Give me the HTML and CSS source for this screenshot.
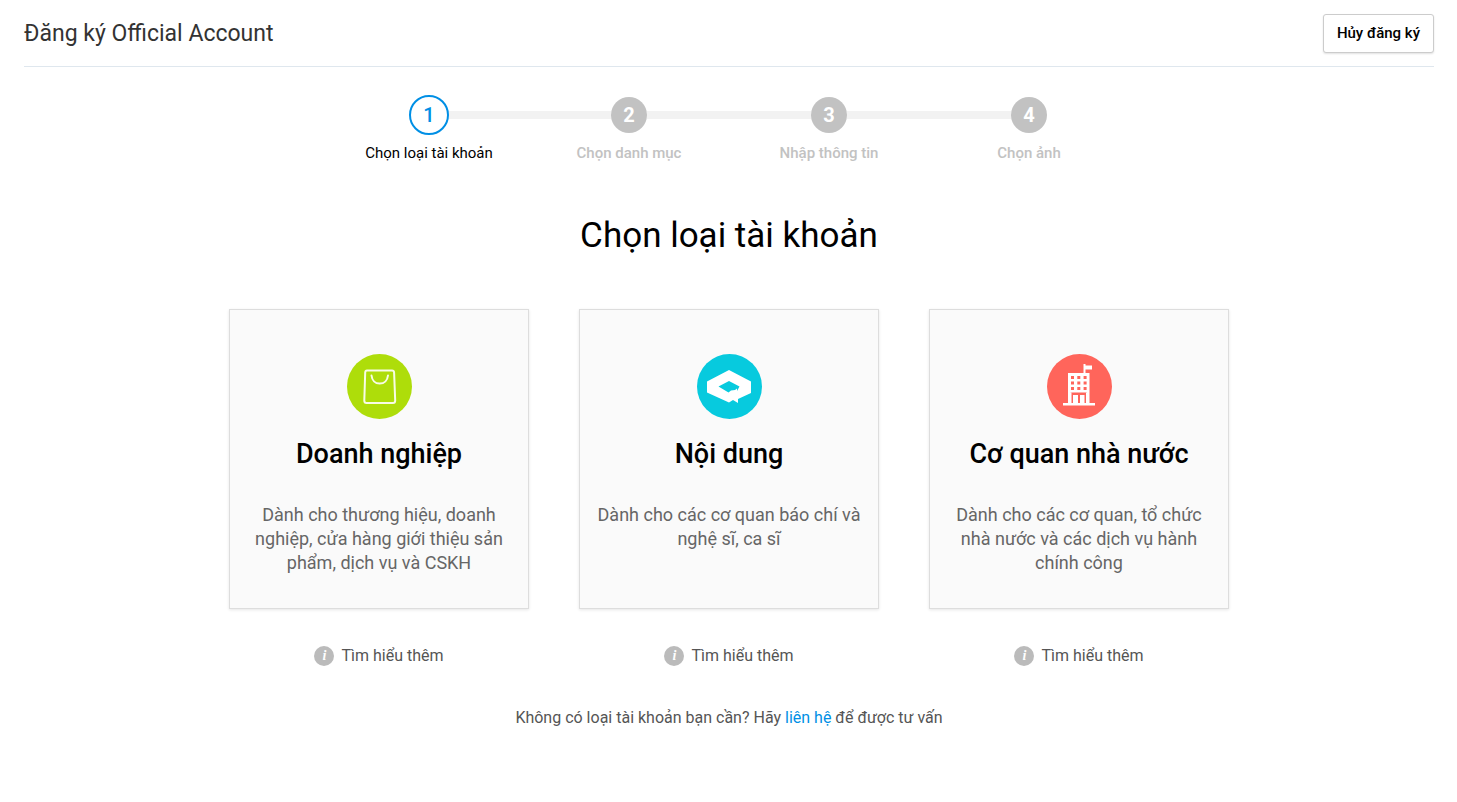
FILE: index.html
```html
<!DOCTYPE html>
<html lang="vi">
<head>
<meta charset="utf-8">
<meta name="viewport" content="width=device-width, initial-scale=1">
<title>Đăng ký Official Account</title>
<link rel="stylesheet" href="styles.css">
</head>
<body>
<header class="header">
  <h1 class="header-title">Đăng ký Official Account</h1>
  <button class="cancel" type="button">Hủy đăng ký</button>
</header>
<main class="main">
  <ol class="steps">
    <li class="step step-active"><span class="step-track"><span class="step-number">1</span></span><span class="step-label">Chọn loại tài khoản</span></li>
    <li class="step"><span class="step-track"><span class="step-number">2</span></span><span class="step-label">Chọn danh mục</span></li>
    <li class="step"><span class="step-track"><span class="step-number">3</span></span><span class="step-label">Nhập thông tin</span></li>
    <li class="step"><span class="step-track"><span class="step-number">4</span></span><span class="step-label">Chọn ảnh</span></li>
  </ol>
  <h2 class="title">Chọn loại tài khoản</h2>
  <div class="types">
    <section class="type">
      <button class="card" type="button">
        <svg class="card-icon" viewBox="0 0 65 65" aria-hidden="true">
          <circle cx="32.500" cy="32.500" r="32.500" fill="#aedd0a"/>
          <g fill="none" stroke="#f8fce6" stroke-width="2" stroke-linecap="round" stroke-linejoin="round">
            <path d="M20 16.500H45Q47 16.500 47.100 18.500L48.200 46.500Q48.200 49 46 49H19.500Q17.300 49 17.300 46.500L18.200 18.500Q18.300 16.500 20 16.500Z"/>
            <path d="M24.500 21.500C25 26 28 29.500 32.700 29.500S40.500 26 41 21.500"/>
          </g>
        </svg>
        <span class="card-name">Doanh nghiệp</span>
        <span class="card-text">Dành cho thương hiệu, doanh nghiệp, cửa hàng giới thiệu sản phẩm, dịch vụ và CSKH</span>
      </button>
      <a class="more" href="#"><span class="info" aria-hidden="true">i</span>Tìm hiểu thêm</a>
    </section>
    <section class="type">
      <button class="card" type="button">
        <svg class="card-icon" viewBox="0 0 65 65" aria-hidden="true">
          <circle cx="32.500" cy="32.500" r="32.500" fill="#07cade"/>
          <path fill="#fff" fill-rule="evenodd" d="M32 16L54 27.500V39L41 45V49L36 46L32 48.500L10 38.500V27.500ZM21.500 32.500L31.500 38.500L34 36.500L38 36L40 34.500V37L42.500 32.500L32 27Z"/>
        </svg>
        <span class="card-name">Nội dung</span>
        <span class="card-text">Dành cho các cơ quan báo chí và nghệ sĩ, ca sĩ</span>
      </button>
      <a class="more" href="#"><span class="info" aria-hidden="true">i</span>Tìm hiểu thêm</a>
    </section>
    <section class="type">
      <button class="card" type="button">
        <svg class="card-icon" viewBox="0 0 65 65" aria-hidden="true">
          <circle cx="32.500" cy="32.500" r="32.500" fill="#ff655b"/>
          <path fill="#fff" d="M36.500 10H38.500V11.500H45V15.500H38.500V19H42.500V49H48V51.500H16V49H21V19H36.500Z"/>
          <path fill="#ff655b" d="M24 22h3v3h-3zM30.300 22h3v3h-3zM36.600 22h3v3h-3zM24 27.500h3v3h-3zM30.300 27.500h3v3h-3zM36.600 27.500h3v3h-3zM24 33h3v3h-3zM30.300 33h3v3h-3zM36.600 33h3v3h-3zM23.500 38.500h16.500V49h-2.500v-8H33v8h-2v-8h-5v8h-2.500z"/>
          <path fill="#fff" d="M23 38.500h1.500V49H23zM39 38.500h1.500V49H39z"/>
        </svg>
        <span class="card-name">Cơ quan nhà nước</span>
        <span class="card-text">Dành cho các cơ quan, tổ chức nhà nước và các dịch vụ hành chính công</span>
      </button>
      <a class="more" href="#"><span class="info" aria-hidden="true">i</span>Tìm hiểu thêm</a>
    </section>
  </div>
  <p class="contact">Không có loại tài khoản bạn cần? Hãy <a class="contact-link" href="#">liên hệ</a> để được tư vấn</p>
</main>
</body>
</html>
```
FILE: styles.css
```css
* { box-sizing: border-box; }
body {
  margin: 0;
  font-family: Roboto, "Noto Sans", sans-serif;
  font-size: 16px;
  color: #000;
  background: #fff;
}
.header {
  display: flex;
  align-items: center;
  justify-content: space-between;
  margin: 0 23px 0 24px;
  padding: 14px 0 13px;
  border-bottom: 1px solid #dfe7ee;
}
.header-title {
  margin: 0;
  font-size: 23px;
  line-height: 28px;
  font-weight: 400;
  color: #333;
}
.cancel {
  padding: 0 13px;
  border: 1px solid #ccc;
  border-radius: 3px;
  background: #fff;
  box-shadow: 0 1px 2px rgba(0, 0, 0, 0.12);
  font: 500 15px/37px Roboto, "Noto Sans", sans-serif;
  color: #000;
}
.main {
  display: flex;
  flex-direction: column;
  align-items: center;
  padding: 28px 23px 28px 24px;
}
.steps {
  display: grid;
  grid-template-columns: repeat(4, 200px);
  margin: 0;
  padding: 0;
  list-style: none;
}
.step {
  display: flex;
  flex-direction: column;
  align-items: center;
  gap: 8px;
  color: #c2c2c2;
}
.step-track {
  display: flex;
  align-items: center;
  align-self: stretch;
  height: 40px;
}
.step-track::before,
.step-track::after {
  content: "";
  flex: 1;
  height: 8px;
  background: #f2f2f2;
}
.step:first-child .step-track::before,
.step:last-child .step-track::after { background: none; }
.step-number {
  width: 36px;
  border-radius: 50%;
  background: #c2c2c2;
  color: #fff;
  font-size: 20px;
  line-height: 36px;
  font-weight: 700;
  text-align: center;
}
.step-label {
  font-size: 15px;
  line-height: 20px;
  font-weight: 500;
}
.step-active .step-number {
  width: 40px;
  border: 2px solid #008fe5;
  background: #fff;
  color: #008fe5;
  font-weight: 500;
}
.step-active .step-label {
  color: #000;
  font-weight: 400;
}
.title {
  margin: 50px 0;
  font-size: 35px;
  line-height: 46px;
  font-weight: 400;
}
.types {
  display: flex;
  flex-wrap: wrap;
  justify-content: center;
  gap: 50px;
}
.type {
  display: flex;
  flex-direction: column;
  align-items: center;
  gap: 37px;
}
.card {
  display: flex;
  flex-direction: column;
  align-items: center;
  width: 300px;
  min-height: 300px;
  padding: 44px 15px 24px;
  border: 1px solid #ddd;
  background: #fafafa;
  box-shadow: 0 1px 3px rgba(0, 0, 0, 0.1);
  font: inherit;
  color: inherit;
}
.card-icon {
  width: 65px;
  height: 65px;
}
.card-name {
  margin: 18px 0 32px;
  font-size: 27px;
  line-height: 34px;
  font-weight: 500;
}
.card-text {
  font-size: 18px;
  line-height: 24px;
  color: #666;
}
.more {
  display: flex;
  align-items: center;
  gap: 7px;
  line-height: 20px;
  color: #555;
  text-decoration: none;
}
.info {
  width: 20px;
  border-radius: 50%;
  background: #bbb;
  color: #fff;
  font: italic 700 14px/20px "Liberation Serif", serif;
  text-align: center;
}
.contact {
  margin: 42px 0 0;
  line-height: 20px;
  color: #555;
}
.contact-link {
  color: #008fe5;
  text-decoration: none;
}
```
